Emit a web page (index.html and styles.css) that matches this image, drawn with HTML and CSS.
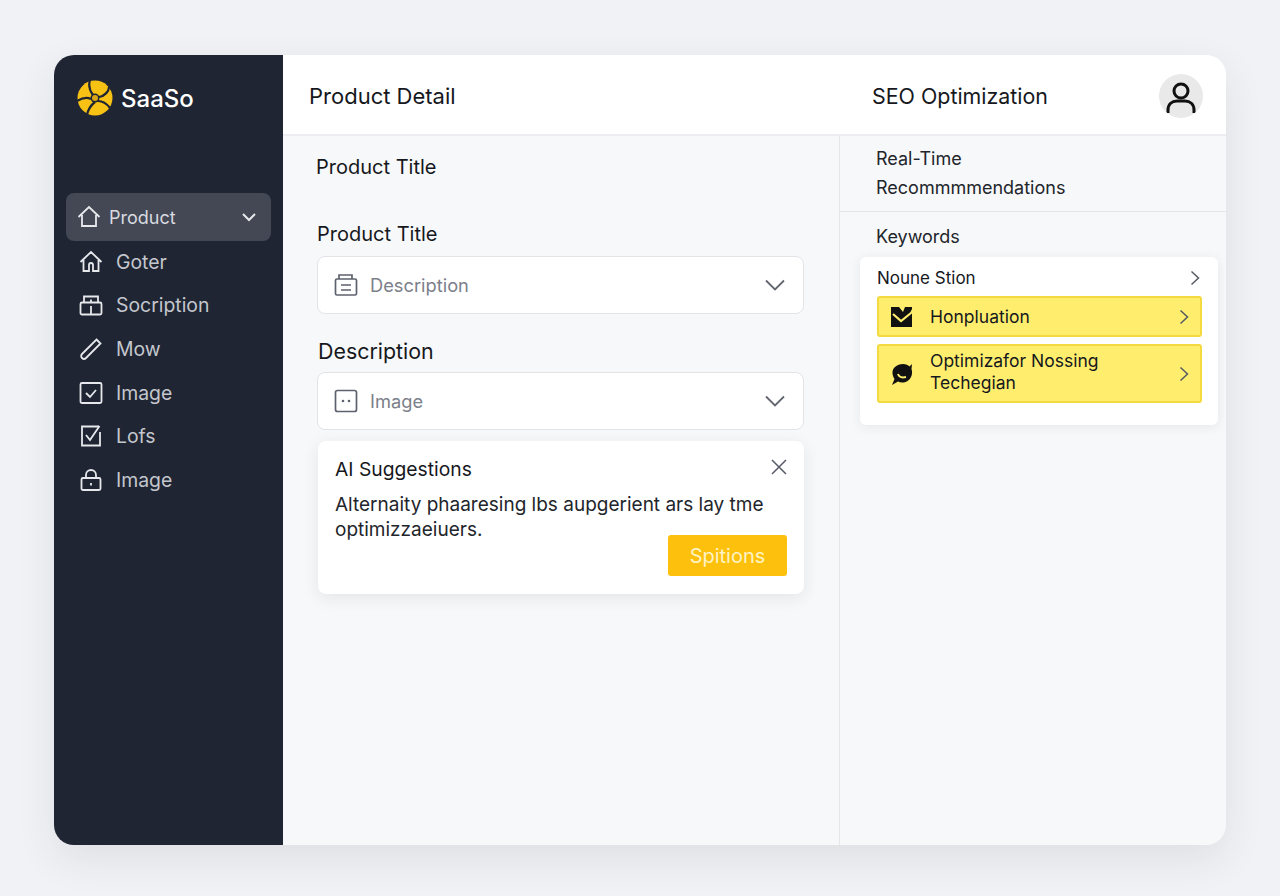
FILE: index.html
```html
<!DOCTYPE html>
<html lang="en">
<head>
    <meta charset="UTF-8">
    <meta name="viewport" content="width=device-width, initial-scale=1.0">
    <title>Product Detail</title>
    <link rel="stylesheet" href="styles.css">
</head>
<body>
    <div class="shell">
        <aside class="sidebar">
            <div class="logo">
                <svg width="36" height="36" viewBox="0 0 36 36">
                    <circle cx="18" cy="18" r="17.5" fill="#f7c213"/>
                    <g fill="none" stroke="#1f2533" stroke-width="2.200">
                        <path d="M13 0c-2 6 0 11 3 15"/>
                        <path d="M0 21c5-3 10-4 14-2"/>
                        <path d="M10 35c1-5 4-10 8-13"/>
                        <path d="M33 28c-3-4-7-7-12-7"/>
                        <path d="M32 7c0 4-4 9-10 10"/>
                    </g>
                    <circle cx="18" cy="18" r="4.500" fill="#1f2533"/>
                    <circle cx="18" cy="18" r="3" fill="#d9a514"/>
                </svg>
                <span>SaaSo</span>
            </div>
            <nav class="nav">
                <a class="nav-active">
                    <svg class="ico" width="24" height="24" viewBox="0 0 24 24"><path d="M1.500 12 12 2l10.500 10M5 10v11h14V10"/></svg>
                    <span>Product</span>
                    <svg class="ico caret" width="16" height="16" viewBox="0 0 16 16"><path d="M2 5l6 6 6-6"/></svg>
                </a>
                <a class="nav-item">
                    <svg class="ico" width="24" height="24" viewBox="0 0 24 24"><path d="M1.500 12 12 2l10.500 10M4.500 10v11h5.500v-6a2 2 0 0 1 4 0v6h5.500V10"/></svg>
                    <span>Goter</span>
                </a>
                <a class="nav-item">
                    <svg class="ico" width="24" height="24" viewBox="0 0 24 24"><rect x="1.500" y="9.500" width="21" height="12" rx="1.500"/><path d="M5 9.500V3.500h14v6M12 6.500v3M12 13v8.500"/></svg>
                    <span>Socription</span>
                </a>
                <a class="nav-item">
                    <svg class="ico" width="24" height="24" viewBox="0 0 24 24"><path d="M17.500 2.500l4 4L7 21a2.800 2.800 0 0 1-4-4z"/></svg>
                    <span>Mow</span>
                </a>
                <a class="nav-item">
                    <svg class="ico" width="24" height="24" viewBox="0 0 24 24"><rect x="1.500" y="2" width="21" height="20" rx="1.500"/><path d="M7 12l4 4 6-7"/></svg>
                    <span>Image</span>
                </a>
                <a class="nav-item">
                    <svg class="ico" width="24" height="24" viewBox="0 0 24 24"><path d="M20 2.500H3v19h18V8"/><path d="M7 11l4 5 9.500-14"/></svg>
                    <span>Lofs</span>
                </a>
                <a class="nav-item">
                    <svg class="ico" width="24" height="24" viewBox="0 0 24 24"><rect x="2.500" y="10" width="19" height="12" rx="1.500"/><path d="M7 10V7a5 5 0 0 1 10 0v3M12 15v2.500"/></svg>
                    <span>Image</span>
                </a>
            </nav>
        </aside>

        <div class="content">
            <header class="topbar">
                <h1 class="page-title">Product Detail</h1>
                <h2 class="seo-title">SEO Optimization</h2>
                <div class="avatar">
                    <svg width="32" height="34" viewBox="0 0 32 34" fill="none" stroke="#111" stroke-width="3">
                        <circle cx="16" cy="11" r="7"/>
                        <path d="M3 33v-3c0-6 4-9 9-9h8c5 0 9 3 9 9v3"/>
                    </svg>
                </div>
            </header>

            <div class="columns">
                <main class="form-col">
                    <div class="section-name">Product Title</div>
                    <label class="field-label">Product Title</label>
                    <div class="select">
                        <svg class="sel-ico" width="24" height="24" viewBox="0 0 24 24"><rect x="1.500" y="6" width="21" height="16" rx="1.500"/><path d="M5 6V2h13v4M7 12h10M7 17h10"/></svg>
                        <span>Description</span>
                        <svg class="sel-caret" width="20" height="12" viewBox="0 0 20 12"><path d="M1 1.500l9 9 9-9"/></svg>
                    </div>
                    <label class="field-label label-desc">Description</label>
                    <div class="select">
                        <svg class="sel-ico" width="24" height="24" viewBox="0 0 24 24"><rect x="1.500" y="1.500" width="21" height="21" rx="2"/><circle class="dot" cx="9" cy="12" r="1.300"/><circle class="dot" cx="15" cy="12" r="1.300"/></svg>
                        <span>Image</span>
                        <svg class="sel-caret" width="20" height="12" viewBox="0 0 20 12"><path d="M1 1.500l9 9 9-9"/></svg>
                    </div>
                    <section class="ai-card">
                        <div class="ai-head">
                            <h3>AI Suggestions</h3>
                            <svg width="16" height="16" viewBox="0 0 16 16" fill="none" stroke="#555b66" stroke-width="1.500"><path d="M1 1l14 14M15 1 1 15"/></svg>
                        </div>
                        <p>Alternaity phaaresing lbs aupgerient ars lay tme optimizzaeiuers.</p>
                        <button class="ai-btn">Spitions</button>
                    </section>
                </main>

                <aside class="seo-col">
                    <div class="recs">Real-Time<br>Recommmmendations</div>
                    <div class="keywords-title">Keywords</div>
                    <section class="kw-card">
                        <div class="kw-head">
                            <span>Noune Stion</span>
                            <svg class="chev" width="10" height="16" viewBox="0 0 10 16"><path d="M1.500 1.500 8.500 8l-7 6.500"/></svg>
                        </div>
                        <div class="kw-row">
                            <svg width="24" height="22" viewBox="0 0 24 22"><path fill="#111" d="M1 1h8l4 5 2-5h7v2l-2 4 2 1v13H1z"/><path fill="none" stroke="#ffee6e" stroke-width="2.200" d="M3 8l8 7 10-8"/></svg>
                            <span>Honpluation</span>
                            <svg class="chev" width="10" height="16" viewBox="0 0 10 16"><path d="M1.500 1.500 8.500 8l-7 6.500"/></svg>
                        </div>
                        <div class="kw-row kw-tall">
                            <svg width="24" height="24" viewBox="0 0 24 24"><path fill="#111" d="M13 2c3 0 5 1 6.500 2.500L22 2l-.5 5c1.500 4.500 0 9.500-4 12-3 2-7 2-9.500.5L2 23l2.500-6C1.500 12 2 7.500 5 5c2-2 5-3 8-3z"/><path fill="none" stroke="#ffee6e" stroke-width="2" d="M8 12c1 3 4 4 8 3"/></svg>
                            <span>Optimizafor Nossing<br>Techegian</span>
                            <svg class="chev" width="10" height="16" viewBox="0 0 10 16"><path d="M1.500 1.500 8.500 8l-7 6.500"/></svg>
                        </div>
                    </section>
                </aside>
            </div>
        </div>
    </div>
</body>
</html>
```

FILE: styles.css
```css
* {
    box-sizing: border-box;
}
body {
    margin: 0;
    height: 896px;
    padding: 55px 54px 51px;
    font-family: Inter, "Liberation Sans", sans-serif;
    background-color: #f1f2f5;
    color: #16181d;
    overflow: hidden;
}
h1, h2, h3, p {
    margin: 0;
    font-weight: 400;
}
.shell {
    display: flex;
    height: 790px;
    border-radius: 20px;
    overflow: hidden;
    background-color: #f7f8f9;
    box-shadow: 0 14px 40px rgba(30, 40, 60, 0.09);
}

/* sidebar */
.sidebar {
    width: 229px;
    flex: none;
    padding: 25px 12px 0;
    background-color: #1f2533;
}
.logo {
    display: flex;
    align-items: center;
    gap: 8px;
    height: 36px;
    padding-left: 11px;
    color: #fff;
    font-size: 24px;
    font-weight: 500;
}
.nav {
    margin-top: 77px;
}
.nav-active {
    display: flex;
    align-items: center;
    height: 48px;
    padding: 0 14px 0 11px;
    margin-bottom: -1px;
    border-radius: 8px;
    background-color: #434854;
    color: #d9dbe0;
    font-size: 18px;
}
.nav-active span {
    margin-left: 8px;
    flex: 1;
}
.nav-item {
    display: flex;
    align-items: center;
    height: 43.6px;
    padding-left: 13px;
    color: #c4c7cd;
    font-size: 19.400px;
}
.nav-item span {
    margin-left: 13px;
}
.ico {
    fill: none;
    stroke: #e6e8ec;
    stroke-width: 1.800;
}
.caret {
    stroke-width: 2;
}

/* top bar */
.content {
    flex: 1;
    display: flex;
    flex-direction: column;
    min-width: 0;
}
.topbar {
    display: flex;
    align-items: center;
    height: 81px;
    flex: none;
    padding-top: 2px;
    background-color: #fff;
    border-bottom: 2px solid #eceef1;
}
.page-title {
    width: 589px;
    padding-left: 26px;
    font-size: 22px;
}
.seo-title {
    flex: 1;
    font-size: 21.400px;
}
.avatar {
    width: 44px;
    height: 44px;
    margin-right: 23px;
    border-radius: 50%;
    background-color: #e9e9ea;
    overflow: hidden;
    display: flex;
    justify-content: center;
    padding-top: 6px;
}

.columns {
    flex: 1;
    display: flex;
    min-height: 0;
}

/* form column */
.form-col {
    width: 557px;
    padding: 19px 35px 0 34px;
    border-right: 1px solid #e4e6ea;
}
.section-name {
    margin-left: -1px;
    font-size: 20px;
    line-height: 24px;
}
.field-label {
    display: block;
    margin-top: 43px;
    font-size: 20px;
    line-height: 24px;
}
.label-desc {
    margin-top: 25px;
    margin-left: 1px;
    font-size: 21.400px;
}
.select {
    display: flex;
    align-items: center;
    height: 58px;
    margin-top: 10px;
    padding: 0 18px 0 16px;
    border: 1.500px solid #e2e4e8;
    border-radius: 8px;
    background-color: #fff;
    color: #7c808a;
    font-size: 18.300px;
}
.label-desc + .select {
    margin-top: 9px;
}
.select span {
    flex: 1;
    margin-left: 12px;
}
.sel-ico {
    fill: none;
    stroke: #5d626e;
    stroke-width: 1.700;
}
.dot {
    fill: #5d626e;
    stroke: none;
}
.sel-caret {
    fill: none;
    stroke: #62666f;
    stroke-width: 1.800;
}
.ai-card {
    position: relative;
    height: 153px;
    margin: 11px 0 0 1px;
    padding: 16px 17px 0;
    border-radius: 8px;
    background-color: #fff;
    box-shadow: 0 4px 16px rgba(30, 40, 60, 0.09);
}
.ai-head {
    display: flex;
    justify-content: space-between;
    align-items: flex-start;
}
.ai-head h3 {
    font-size: 19.300px;
    line-height: 24px;
}
.ai-head svg {
    margin-top: 2px;
}
.ai-card p {
    margin-top: 11px;
    font-size: 19px;
    line-height: 25px;
    color: #22252b;
}
.ai-btn {
    position: absolute;
    right: 17px;
    bottom: 18px;
    width: 119px;
    height: 41px;
    border: none;
    border-radius: 3px;
    background-color: #fdc10d;
    color: #fff3c4;
    font-family: inherit;
    font-size: 20px;
}

/* seo column */
.seo-col {
    flex: 1;
    min-width: 0;
    padding-top: 8px;
}
.recs {
    height: 68px;
    padding-left: 36px;
    border-bottom: 1px solid #e4e6ea;
    font-size: 18px;
    line-height: 29px;
    color: #22252b;
}
.keywords-title {
    margin-top: 14px;
    padding-left: 36px;
    font-size: 18px;
    line-height: 22px;
    color: #22252b;
}
.kw-card {
    width: 358px;
    height: 168px;
    margin: 9px 0 0 20px;
    padding: 9px 16px 0 17px;
    border-radius: 6px;
    background-color: #fff;
    box-shadow: 0 2px 12px rgba(30, 40, 60, 0.08);
}
.kw-head {
    display: flex;
    justify-content: space-between;
    align-items: center;
    height: 24px;
    padding-right: 2px;
    font-size: 17px;
}
.kw-row {
    display: flex;
    align-items: center;
    height: 41px;
    margin-top: 7px;
    padding: 0 11px 0 11px;
    border: 2px solid #f4d93f;
    border-radius: 3px;
    background-color: #ffee6e;
    font-size: 17.500px;
    line-height: 22px;
}
.kw-head + .kw-row {
    margin-top: 6px;
}
.kw-row span {
    flex: 1;
    margin-left: 16px;
}
.kw-tall {
    height: 59px;
}
.kw-tall span {
    margin-bottom: 4px;
}
.chev {
    fill: none;
    stroke: #555962;
    stroke-width: 1.500;
}
```
